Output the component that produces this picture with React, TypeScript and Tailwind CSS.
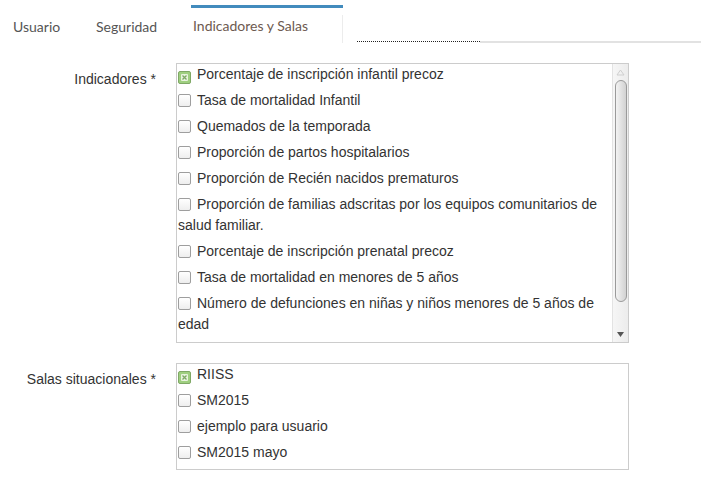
import React from "react";

const indicadores = [
  { label: "Porcentaje de inscripción infantil precoz", checked: true },
  { label: "Tasa de mortalidad Infantil" },
  { label: "Quemados de la temporada" },
  { label: "Proporción de partos hospitalarios" },
  { label: "Proporción de Recién nacidos prematuros" },
  { label: "Proporción de familias adscritas por los equipos comunitarios de salud familiar." },
  { label: "Porcentaje de inscripción prenatal precoz" },
  { label: "Tasa de mortalidad en menores de 5 años" },
  { label: "Número de defunciones en niñas y niños menores de 5 años de edad" },
];

const salas = [
  { label: "RIISS", checked: true },
  { label: "SM2015" },
  { label: "ejemplo para usuario" },
  { label: "SM2015 mayo" },
];

function Check({ checked }: { checked?: boolean }) {
  if (checked) {
    return (
      <span className="inline-flex items-center justify-center w-[13px] h-[13px] mr-[6px] align-[-2px] rounded-[2px] border border-[#7fa866] bg-[#9fcf80]">
        <svg width="7" height="7" viewBox="0 0 7 7">
          <rect x="0" y="0" width="7" height="7" rx="1" fill="#e8f3df" />
          <path d="M1.5 1.5 L5.5 5.5 M5.5 1.5 L1.5 5.5" stroke="#7fa866" strokeWidth="1.3" />
        </svg>
      </span>
    );
  }
  return (
    <span className="inline-block w-[13px] h-[13px] mr-[6px] align-[-2px] rounded-[2px] border border-[#9e9e9e] bg-gradient-to-b from-white to-[#eeeeee]" />
  );
}

function Item({ label, checked }: { label: string; checked?: boolean }) {
  return (
    <div className="leading-[21px] mb-[5px]">
      <Check checked={checked} />
      {label}
    </div>
  );
}

function Scrollbar() {
  return (
    <div className="w-[16px] shrink-0 flex flex-col items-center border-l border-[#e3e3e3] bg-gradient-to-r from-[#f6f6f6] to-[#ececec]">
      <svg width="9" height="7" viewBox="0 0 9 7" className="mt-[5px]">
        <path d="M4.5 1 L8 6 L1 6 Z" fill="none" stroke="#cfcfcf" />
      </svg>
      <div className="mt-[4px] w-[12px] h-[222px] rounded-full border border-[#9a9a9a] bg-gradient-to-r from-[#f3f3f3] via-[#e2e2e2] to-[#d2d2d2]" />
      <div className="flex-1" />
      <svg width="9" height="7" viewBox="0 0 9 7" className="mb-[4px]">
        <path d="M1 1 L8 1 L4.5 6 Z" fill="#555" />
      </svg>
    </div>
  );
}

export default function App() {
  return (
    <div className="w-[701px] h-[504px] bg-white text-[#333] font-['Liberation_Sans',Arial,sans-serif] text-[14px]">
      <div className="flex h-[44px] font-['Lato',sans-serif] text-[14px] text-[#555]">
        <div className="w-[83px] pl-[13px] pt-[16px]">Usuario</div>
        <div className="w-[108px] pl-[13px] pt-[16px]">Seguridad</div>
        <div className="w-[152px] mt-[5px] border-t-[3px] border-[#428bbd] pl-[2px] pt-[8px] text-[#6d5a50]">
          <div className="h-full border-r border-[#ececec] -mt-[1px]">Indicadores y Salas</div>
        </div>
        <div className="w-[14px]" />
        <div className="w-[123px] border-b border-dotted border-[#222] mb-[2px]" />
        <div className="flex-1 border-b-2 border-[#e2e2e2] mb-[1px]" />
      </div>

      <div className="grid grid-cols-[156px_453px] gap-x-[20px] mt-[19px]">
        <div className="text-right pt-[6px]">Indicadores *</div>
        <div className="h-[280px] border border-[#ccc] flex overflow-hidden">
          <div className="flex-1 pl-[1px] pr-[6px] overflow-hidden">
            {indicadores.map((it) => (
              <Item key={it.label} label={it.label} checked={it.checked} />
            ))}
          </div>
          <Scrollbar />
        </div>

        <div className="text-right pt-[6px] mt-[20px]">Salas situacionales *</div>
        <div className="mt-[20px] h-[107px] border border-[#ccc] pl-[1px]">
          {salas.map((it) => (
            <Item key={it.label} label={it.label} checked={it.checked} />
          ))}
        </div>
      </div>
    </div>
  );
}
